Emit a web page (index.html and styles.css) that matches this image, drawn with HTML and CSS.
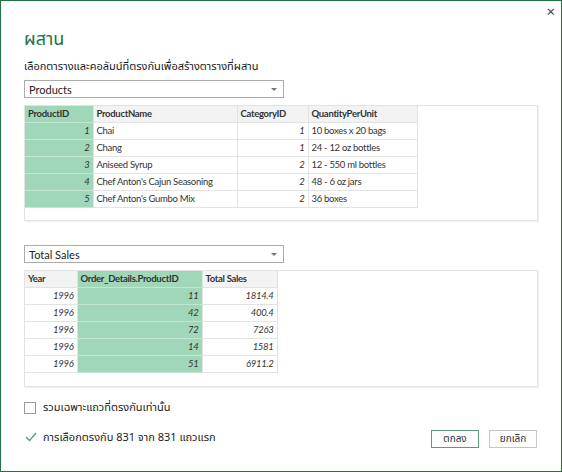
FILE: index.html
```html
<!DOCTYPE html>
<html lang="th">
<head>
  <meta charset="UTF-8">
  <title>ผสาน</title>
  <link rel="stylesheet" href="styles.css">
</head>
<body>

  <div class="dialog">
    <div class="topbar">
      <span class="close">×</span>
    </div>

    <h1 class="title">ผสาน</h1>
    <p class="subtitle">เลือกตารางและคอลัมน์ที่ตรงกันเพื่อสร้างตารางที่ผสาน</p>

    <div class="select">
      <span>Products</span>
      <span class="arrow"></span>
    </div>

    <div class="preview first">
      <table class="grid">
        <colgroup>
          <col style="width:68px"><col style="width:144px"><col style="width:71px"><col style="width:109px">
        </colgroup>
        <tr>
          <th class="key">ProductID</th><th>ProductName</th><th>CategoryID</th><th>QuantityPerUnit</th>
        </tr>
        <tr><td class="key num">1</td><td>Chai</td><td class="num">1</td><td>10 boxes x 20 bags</td></tr>
        <tr><td class="key num">2</td><td>Chang</td><td class="num">1</td><td>24 - 12 oz bottles</td></tr>
        <tr><td class="key num">3</td><td>Aniseed Syrup</td><td class="num">2</td><td>12 - 550 ml bottles</td></tr>
        <tr><td class="key num">4</td><td>Chef Anton's Cajun Seasoning</td><td class="num">2</td><td>48 - 6 oz jars</td></tr>
        <tr><td class="key num">5</td><td>Chef Anton's Gumbo Mix</td><td class="num">2</td><td>36 boxes</td></tr>
      </table>
    </div>

    <div class="select">
      <span>Total Sales</span>
      <span class="arrow"></span>
    </div>

    <div class="preview second">
      <table class="grid">
        <colgroup>
          <col style="width:52px"><col style="width:125px"><col style="width:75px">
        </colgroup>
        <tr>
          <th>Year</th><th class="key">Order_Details.ProductID</th><th>Total Sales</th>
        </tr>
        <tr><td class="num">1996</td><td class="key num">11</td><td class="num">1814.4</td></tr>
        <tr><td class="num">1996</td><td class="key num">42</td><td class="num">400.4</td></tr>
        <tr><td class="num">1996</td><td class="key num">72</td><td class="num">7263</td></tr>
        <tr><td class="num">1996</td><td class="key num">14</td><td class="num">1581</td></tr>
        <tr><td class="num">1996</td><td class="key num">51</td><td class="num">6911.2</td></tr>
      </table>
    </div>

    <label class="check">
      <span class="box"></span>
      <span>รวมเฉพาะแถวที่ตรงกันเท่านั้น</span>
    </label>

    <div class="footer">
      <div class="status">
        <svg width="12" height="10" viewBox="0 0 12 10">
          <polyline points="1,5 4.5,8.5 11,1" fill="none" stroke="#5a9e78" stroke-width="1.4"/>
        </svg>
        <span>การเลือกตรงกับ 831 จาก 831 แถวแรก</span>
      </div>
      <div class="buttons">
        <button class="btn primary">ตกลง</button>
        <button class="btn">ยกเลิก</button>
      </div>
    </div>
  </div>

</body>
</html>
```

FILE: styles.css
```css
* {
  margin: 0;
  padding: 0;
  box-sizing: border-box;
}

body {
  width: 562px;
  height: 472px;
  background: #fff;
  border: 1px solid #217346;
  font-family: 'Noto Sans Thai', 'Noto Sans', 'Liberation Sans', sans-serif;
  color: #222;
}

.dialog {
  padding: 0 24px 0 23px;
}

.topbar {
  display: flex;
  justify-content: flex-end;
  height: 22px;
  margin-right: -18px;
}

.close {
  font-size: 15px;
  line-height: 24px;
  color: #444;
}

.title {
  font-size: 18px;
  font-weight: normal;
  color: #217346;
  line-height: 28px;
  margin-top: 3px;
}

.subtitle {
  font-size: 11px;
  line-height: 16px;
  margin-top: 5px;
  color: #1a1a1a;
}

.select {
  width: 260px;
  height: 18px;
  margin-top: 5px;
  border: 1px solid #ababab;
  display: flex;
  align-items: center;
  justify-content: space-between;
  padding: 0 6px 0 4px;
  font-family: Lato, 'Liberation Sans', sans-serif;
  font-size: 11px;
  color: #222;
}

.arrow {
  width: 0;
  height: 0;
  border-left: 3px solid transparent;
  border-right: 3px solid transparent;
  border-top: 3px solid #777;
}

.preview {
  width: 514px;
  margin-top: 7px;
  border: 1px solid #e3e3e3;
  box-shadow: 1px 1px 1px rgba(0,0,0,0.06);
  background: #fff;
}

.preview.first {
  height: 116px;
  margin-bottom: 24px;
}

.preview.second {
  height: 117px;
}

.grid {
  border-collapse: collapse;
  table-layout: fixed;
  font-family: Lato, 'Liberation Sans', sans-serif;
  font-size: 9.5px;
  letter-spacing: -0.3px;
  color: #333;
}

.grid th,
.grid td {
  height: 17px;
  padding: 0 3px;
  border-right: 1px solid #e3e3e3;
  border-bottom: 1px solid #e3e3e3;
  text-align: left;
  white-space: nowrap;
  overflow: hidden;
}

.grid th {
  height: 16px;
  background: #f3f3f3;
  font-weight: bold;
  color: #333;
}

.grid .num {
  text-align: right;
  font-style: italic;
}

.grid .key {
  background: #a1d7b9;
  border-bottom-color: #c3e6d2;
}

.check {
  display: flex;
  align-items: center;
  gap: 7px;
  margin-top: 12px;
  font-size: 11px;
  color: #222;
}

.box {
  width: 12px;
  height: 12px;
  border: 1px solid #9a9a9a;
  background: #fff;
}

.footer {
  display: flex;
  justify-content: space-between;
  align-items: center;
  margin-top: 10px;
}

.status {
  display: flex;
  align-items: center;
  gap: 6px;
  font-size: 11px;
  color: #222;
  padding-left: 1px;
}

.buttons {
  display: flex;
  gap: 10px;
  margin-top: 4px;
}

.btn {
  width: 48px;
  height: 18px;
  border: 1px solid #c6c6c6;
  background: #fdfdfd;
  font-family: 'Noto Sans Thai', 'Noto Sans', sans-serif;
  font-size: 10px;
  color: #333;
}

.btn.primary {
  border-color: #5a9e78;
}
```
